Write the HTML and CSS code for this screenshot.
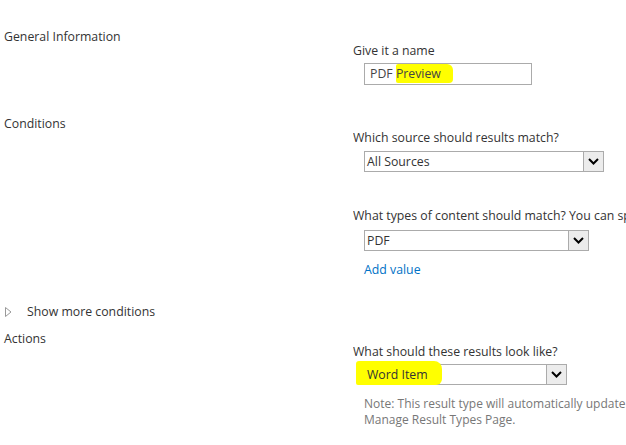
FILE: index.html
```html
<!DOCTYPE html>
<html>
<head>
<meta charset="utf-8">
<link rel="stylesheet" href="styles.css">
</head>
<body>
<div class="page">
  <section class="sec sec-general">
    <div class="label">General Information</div>
    <div class="fields">
      <div class="q">Give it a name</div>
      <div class="input"><span>PDF </span><span class="hl hl-preview">Preview</span></div>
    </div>
  </section>

  <section class="sec sec-cond">
    <div class="label">Conditions</div>
    <div class="fields">
      <div class="q">Which source should results match?</div>
      <div class="select w-source"><span class="val">All Sources</span><span class="btn"><svg width="11" height="7" viewBox="0 0 11 7"><path d="M1 1 L5.5 5.5 L10 1" fill="none" stroke="#000" stroke-width="2"/></svg></span></div>
      <div class="q q-types">What types of content should match? You can specify multiple values</div>
      <div class="select w-type"><span class="val">PDF</span><span class="btn"><svg width="11" height="7" viewBox="0 0 11 7"><path d="M1 1 L5.5 5.5 L10 1" fill="none" stroke="#000" stroke-width="2"/></svg></span></div>
      <a class="link">Add value</a>
    </div>
  </section>

  <div class="more"><span class="tri"><svg width="7" height="10" viewBox="0 0 7 10"><path d="M0.5 0.5 L6 5 L0.5 9.5 Z" fill="none" stroke="#999" stroke-width="1"/></svg></span><span>Show more conditions</span></div>

  <section class="sec sec-actions">
    <div class="label">Actions</div>
    <div class="fields">
      <div class="q">What should these results look like?</div>
      <div class="select w-look"><span class="hl hl-word"></span><span class="val">Word Item</span><span class="btn"><svg width="11" height="7" viewBox="0 0 11 7"><path d="M1 1 L5.5 5.5 L10 1" fill="none" stroke="#000" stroke-width="2"/></svg></span></div>
      <div class="note"><div class="note-line">Note: This result type will automatically update with the latest version of the display templates on the</div><div class="note-line">Manage Result Types Page.</div></div>
    </div>
  </section>
</div>
</body>
</html>
```

FILE: styles.css
```css
html, body {
  margin: 0;
  padding: 0;
  background: #fff;
}
body {
  font-family: "Open Sans", "Noto Sans", sans-serif;
  font-size: 12.3px;
  color: #444;
  overflow: hidden;
  width: 626px;
  height: 445px;
}
.page {
  padding-top: 28px;
  padding-left: 4px;
}
.sec {
  display: grid;
  grid-template-columns: 349px 1fr;
  line-height: 17px;
}
.label {
  color: #333;
}
.fields {
  white-space: nowrap;
  overflow: hidden;
  padding-top: 14px;
}
.q {
  color: #333;
}
.input {
  margin: 4px 0 0 11px;
  width: 161px;
  height: 20px;
  border: 1px solid #ababab;
  line-height: 20px;
  padding-left: 5px;
  box-sizing: content-box;
}
.hl {
  background: #ffff00;
}
.hl-preview {
  padding: 1px 12px 1px 0;
  border-radius: 2px 6px 4px 2px;
}
.select {
  position: relative;
  margin: 6px 0 0 11px;
  height: 19px;
  border: 1px solid #ababab;
  display: flex;
  align-items: stretch;
  line-height: 19px;
  color: #333;
}
.select .val {
  flex: 1;
  padding-left: 2px;
  position: relative;
}
.select .btn {
  width: 19px;
  border-left: 1px solid #ababab;
  background: #ececec;
  display: flex;
  align-items: center;
  justify-content: center;
}
.w-source { width: 238px; margin-top: 5px; }
.w-type { width: 223px; }
.w-look { width: 201px; }
.sec-general { height: 87px; }
.sec-cond .fields { padding-top: 14px; }
.q-types { margin-top: 35px; }
.link {
  display: block;
  color: #0072c6;
  margin: 10px 0 0 11px;
}
.more {
  margin-top: 25px;
  display: flex;
  align-items: center;
  line-height: 17px;
  color: #333;
}
.more .tri {
  width: 22px;
  display: flex;
  align-items: center;
  padding-left: 1px;
}
.sec-actions {
  margin-top: 10px;
}
.sec-actions .fields { padding-top: 13px; }
.sec-actions .select { margin-top: 4px; }
.hl-word {
  position: absolute;
  left: -9px;
  top: -4px;
  width: 86px;
  height: 24px;
  border-radius: 3px 8px 6px 2px;
}
.note {
  color: #777;
  margin: 11px 0 0 11px;
  font-size: 12px;
  line-height: 16px;
}
.note-line {
  white-space: nowrap;
}
```
